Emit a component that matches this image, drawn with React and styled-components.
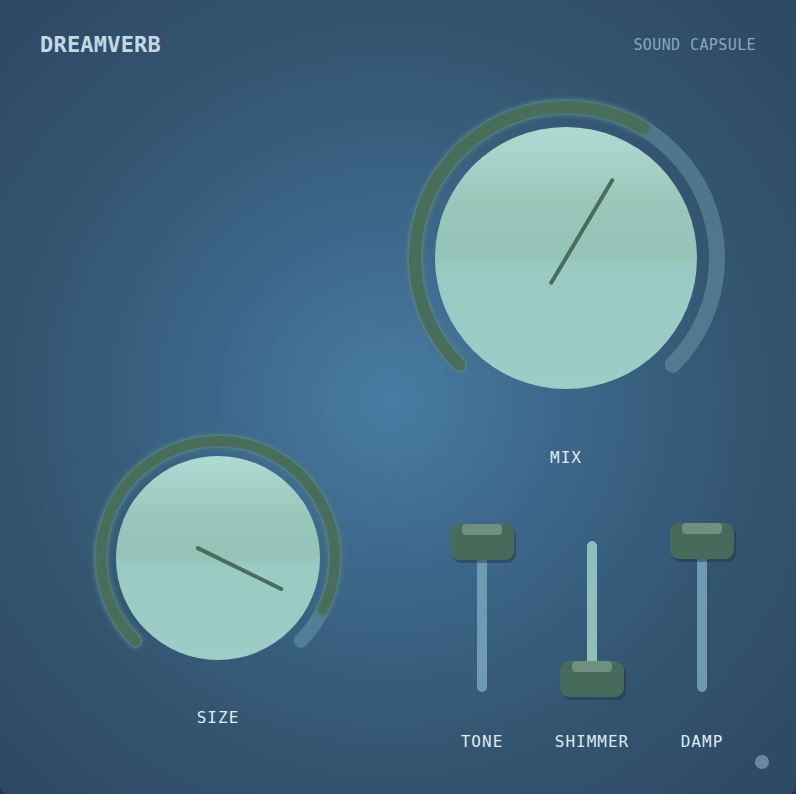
import React from 'react';
import styled, { createGlobalStyle } from 'styled-components';

const GlobalStyle = createGlobalStyle`
    html, body {
        margin: 0;
        padding: 0;
        background: #2b3050;
    }
    * {
        box-sizing: border-box;
    }
`;

const Panel = styled.div`
    position: relative;
    width: 796px;
    height: 794px;
    overflow: hidden;
    border-radius: 0 0 8px 8px;
    background: radial-gradient(circle at 390px 400px, #487ca3 0%, #3d678a 30%, #33546f 65%, #2d4863 100%);
    font-family: "DejaVu Sans Mono", "Liberation Mono", monospace;
`;

const Header = styled.div`
    display: flex;
    align-items: center;
    justify-content: space-between;
    height: 26px;
    margin: 31px 40px;
`;

const Brand = styled.div`
    font-size: 22px;
    font-weight: bold;
    letter-spacing: 0.2px;
    color: #c3d8e2;
`;

const Maker = styled.div`
    margin-top: 1px;
    font-size: 15px;
    letter-spacing: 0.4px;
    color: #89a9bb;
`;

const Body = styled.div`
    display: grid;
    grid-template-columns: 396px 340px;
    height: 706px;
`;

const LeftCol = styled.div`
    display: flex;
    flex-direction: column;
    justify-content: flex-end;
    padding: 0 0 66px 40px;
`;

const RightCol = styled.div`
    display: flex;
    flex-direction: column;
`;

const KnobBlock = styled.div`
    display: flex;
    flex-direction: column;
    align-items: center;
`;

const Label = styled.div`
    margin-top: ${p => p.$gap}px;
    height: 20px;
    line-height: 20px;
    font-size: 16px;
    letter-spacing: 1px;
    color: #deeaf0;
    text-align: center;
`;

const KnobSvg = styled.svg`
    display: block;
    overflow: visible;
`;

const SliderRow = styled.div`
    display: flex;
    margin: 51px 0 0 31px;
`;

const SliderCol = styled.div`
    width: 110px;
    display: flex;
    flex-direction: column;
    align-items: center;
`;

const SliderArea = styled.div`
    position: relative;
    width: 110px;
    height: 180px;
`;

const Track = styled.div`
    width: 10px;
    height: 151px;
    margin: 22px auto 0;
    border-radius: 5px;
    background: ${p => p.$color};
`;

const Thumb = styled.div`
    position: absolute;
    left: 50%;
    width: 64px;
    height: 36px;
    margin-left: -32px;
    border-radius: 9px;
    background: #476b5a;
    box-shadow: 2px 3px 0 rgba(30, 50, 70, 0.45);

    &::before {
        content: '';
        position: absolute;
        top: 0;
        left: 12px;
        width: 40px;
        height: 11px;
        border-radius: 4px;
        background: #6f9080;
    }
`;

const StatusDot = styled.div`
    position: absolute;
    right: 27px;
    bottom: 25px;
    width: 14px;
    height: 14px;
    border-radius: 50%;
    background: #6888a3;
`;

const START = -135;
const SWEEP = 270;

const polar = (c, r, deg) => {
    const a = (deg * Math.PI) / 180;
    return [c + r * Math.sin(a), c - r * Math.cos(a)];
};

const arcPath = (c, r, from, to) => {
    const [x1, y1] = polar(c, r, from);
    const [x2, y2] = polar(c, r, to);
    const large = to - from > 180 ? 1 : 0;
    return `M ${x1} ${y1} A ${r} ${r} 0 ${large} 1 ${x2} ${y2}`;
};

const Knob = ({ id, size, face, ring, stroke, value }) => {
    const c = size / 2;
    const end = START + SWEEP * value;
    const [px1, py1] = polar(c, -face * 0.22, end);
    const [px2, py2] = polar(c, face * 0.69, end);

    return (
        <KnobSvg width={size} height={size} viewBox={`0 0 ${size} ${size}`}>
            <defs>
                <linearGradient id={`${id}-face`} x1="0" y1="0" x2="0" y2="1">
                    <stop offset="0" stopColor="#afdad2" />
                    <stop offset="0.28" stopColor="#9bc7bb" />
                    <stop offset="0.49" stopColor="#95c3b7" />
                    <stop offset="0.54" stopColor="#9acbc3" />
                    <stop offset="1" stopColor="#9dcdc6" />
                </linearGradient>
                <filter id={`${id}-glow`} x="-20%" y="-20%" width="140%" height="140%">
                    <feGaussianBlur stdDeviation="1.5" />
                </filter>
            </defs>
            <path
                d={arcPath(c, ring, START, START + SWEEP)}
                fill="none"
                stroke="rgba(130, 180, 192, 0.36)"
                strokeWidth={stroke + 4}
                strokeLinecap="round"
            />
            <path
                d={arcPath(c, ring, START, end)}
                fill="none"
                stroke="rgba(74, 118, 122, 0.6)"
                strokeWidth={stroke + 8}
                strokeLinecap="round"
                filter={`url(#${id}-glow)`}
            />
            <path
                d={arcPath(c, ring, START, end)}
                fill="none"
                stroke="#486e5a"
                strokeWidth={stroke}
                strokeLinecap="round"
            />
            <circle cx={c} cy={c} r={face} fill={`url(#${id}-face)`} />
            <line
                x1={px1}
                y1={py1}
                x2={px2}
                y2={py2}
                stroke="#4a6c5a"
                strokeWidth={4}
                strokeLinecap="round"
            />
        </KnobSvg>
    );
};

const sliders = [
    { name: 'TONE', value: 0.99, color: '#6e9ab3' },
    { name: 'SHIMMER', value: 0, color: '#8cc0b8' },
    { name: 'DAMP', value: 1, color: '#6d99b2' },
];

const Slider = ({ name, value, color }) => (
    <SliderCol>
        <SliderArea>
            <Track $color={color} />
            <Thumb style={{ top: 4 + (1 - value) * 138 }} />
        </SliderArea>
        <Label $gap={33}>{name}</Label>
    </SliderCol>
);

const App = () => {
    return (
        <Panel>
            <GlobalStyle />
            <Header>
                <Brand>DREAMVERB</Brand>
                <Maker>SOUND CAPSULE</Maker>
            </Header>
            <Body>
                <LeftCol>
                    <KnobBlock>
                        <Knob id="size" size={260} face={102} ring={117} stroke={10} value={0.93} />
                        <Label $gap={20}>SIZE</Label>
                    </KnobBlock>
                </LeftCol>
                <RightCol>
                    <KnobBlock>
                        <Knob id="mix" size={340} face={131} ring={151} stroke={12} value={0.614} />
                        <Label $gap={20}>MIX</Label>
                    </KnobBlock>
                    <SliderRow>
                        {sliders.map(s => (
                            <Slider key={s.name} {...s} />
                        ))}
                    </SliderRow>
                </RightCol>
            </Body>
            <StatusDot />
        </Panel>
    );
};

export default App;
